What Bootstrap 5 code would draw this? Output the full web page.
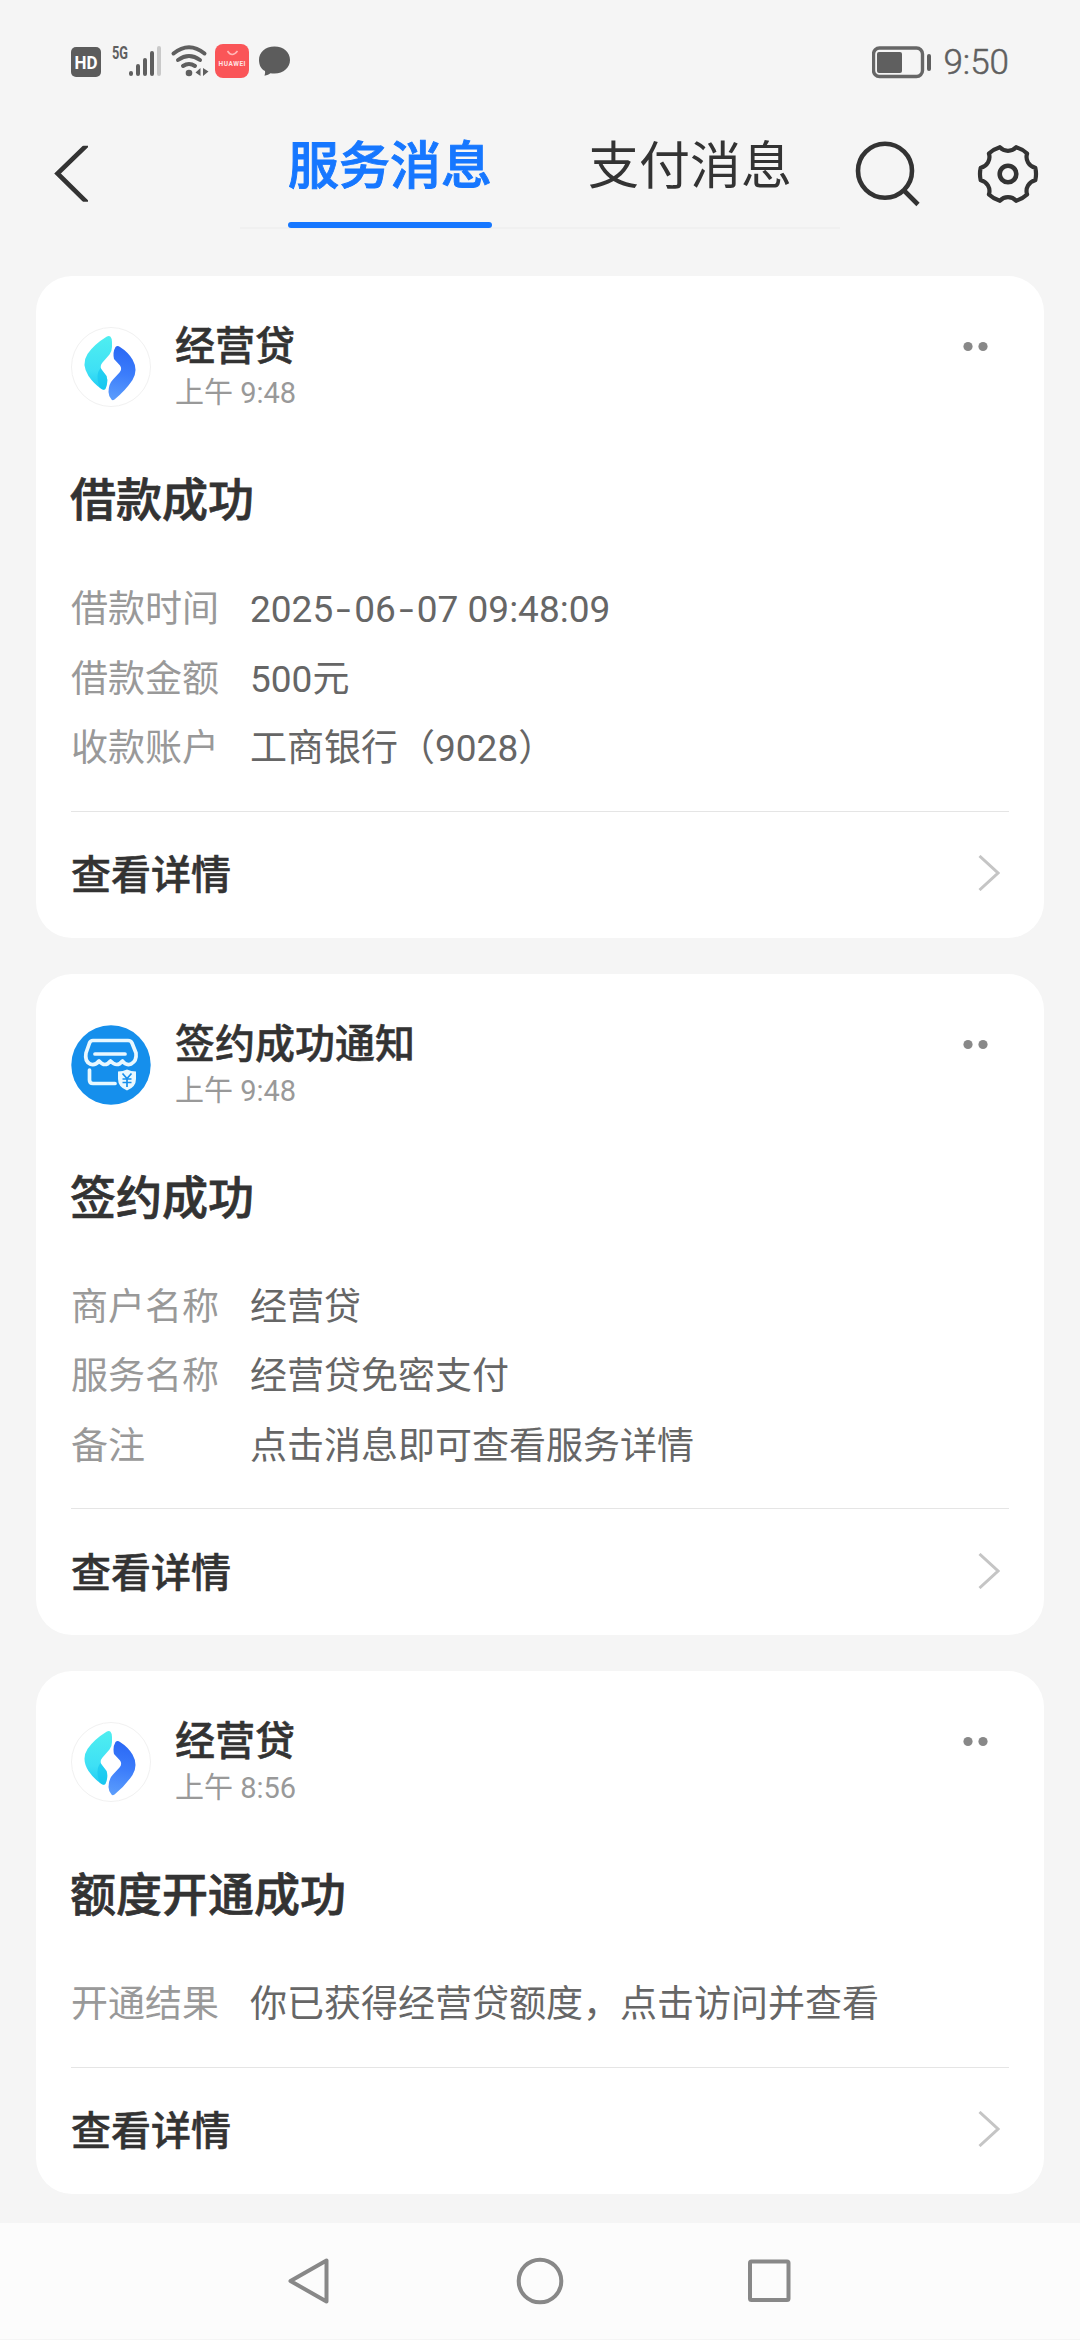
<!DOCTYPE html>
<html lang="zh-CN">
<head>
<meta charset="utf-8">
<meta name="viewport" content="width=device-width, initial-scale=1">
<title>服务消息</title>
<link href="https://cdn.jsdelivr.net/npm/bootstrap@5.3.0/dist/css/bootstrap.min.css" rel="stylesheet">
<style>
body{width:1080px;height:2340px;overflow:hidden;background:#f5f5f5;color:#333;font-family:Roboto,"Noto Sans CJK SC",sans-serif}
svg{display:block;flex:none}
.status-bar{height:124px;padding:0 71px 0 71px}
.status-left{height:124px}
.clock-text{font-size:35px;line-height:40px;color:#5f5f5f;font-weight:300;-webkit-text-stroke:.5px #5f5f5f;margin-left:11px;padding-top:2px}
.top-bar{height:105px;margin-bottom:47px}
.back-box{width:240px;padding:20px 0 0 54px}
.msg-tabs{width:600px;height:105px;border-bottom:2px solid #f0f0f0;--bs-nav-link-padding-x:0;--bs-nav-link-padding-y:0;flex:none;flex-wrap:nowrap}
.msg-tabs .nav-item{width:300px;display:flex;justify-content:center}
.msg-tabs .nav-link{width:204px;height:104px;padding:13px 0 0;font-size:51px;line-height:60px;color:#333;white-space:nowrap;border:0;position:relative}
.msg-tabs .nav-link.active{color:#1677ff;font-weight:500;-webkit-text-stroke:.9px #1677ff}
.msg-tabs .nav-link.active::after{content:"";position:absolute;left:0;right:0;bottom:0;height:6px;border-radius:3px;background:#1677ff}
.msg-list{padding:0 36px;gap:36px}
.msg-card{border:0;border-radius:36px;padding:0 35px;background:#fff;color:#333}
.msg-head{padding-top:51px;height:131px}
.sender{margin-left:24px}
.sender-name{font-size:40px;line-height:44px;font-weight:500;margin-top:-2px;-webkit-text-stroke:.5px #333}
.sender-time{font-size:29px;line-height:40px;color:#999;margin-top:4px}
.more-dots{margin:14px 20px 0 0}
.msg-title{font-size:46px;line-height:60px;font-weight:500;-webkit-text-stroke:.7px #333;margin:63px 0 45px -1px}
.msg-rows{padding-bottom:27px;margin:0}
.msg-rows>div{height:69.5px;font-size:37px;line-height:69.5px;white-space:nowrap}
.msg-rows dt{width:179px;color:#999;font-weight:400;flex:none}
.msg-rows dd{margin:0;color:#666}
.date-dash{display:inline-block;width:21px;text-align:center;transform:scaleX(1.4)}
.msg-foot{height:127px;border-top:1px solid #e5e5e5;font-size:40px;font-weight:500;-webkit-text-stroke:.5px #333;padding-right:9px}
.msg-foot span{padding-top:3px}
.msg-foot svg{margin-bottom:3px}
.sys-nav{height:116px;margin-top:29px;background:#fcfcfc;padding:0 286px}
</style>
<script src="https://cdn.jsdelivr.net/npm/bootstrap@5.3.0/dist/js/bootstrap.bundle.min.js"></script>
</head>
<body>
<svg width="0" height="0" class="position-absolute" aria-hidden="true">
<defs>
<linearGradient id="cy" x1="0" y1="0" x2="0" y2="1"><stop offset="0" stop-color="#4feef0"/><stop offset=".65" stop-color="#3ee0f5"/><stop offset="1" stop-color="#1ecbf3"/></linearGradient>
<linearGradient id="bl" x1=".4" y1="0" x2=".3" y2="1"><stop offset="0" stop-color="#2a68f5"/><stop offset=".5" stop-color="#3c7dfb"/><stop offset="1" stop-color="#5b9dfc"/></linearGradient>
<symbol id="loan" viewBox="0 0 80 80">
<circle cx="40" cy="40" r="39.5" fill="#fff" stroke="#f1f1f1"/>
<path d="M35.500 9.800Q38 8 39.500 9.800Q41 11.500 41 15V20Q41 24 38.500 27.500L31.500 35.500Q28.500 39 30.500 42.500L35.500 49Q36.700 52 36 57L35 60.500Q34 64 30.500 62Q23 57 17.500 49Q10 37 16.500 27Q23 17.500 35.500 9.800Z" fill="url(#cy)"/>
<path d="M29.500 41Q24 47.500 28.500 60.500L30.500 62Q34 64 35 60.500L36 57Q36.700 52 35.500 49Z" fill="#12c4ee" opacity=".6"/>
<path d="M44.500 20Q46.500 18 49 20Q57 25 61.500 32.500Q67.500 43 61.500 53Q54.500 63.500 43.500 72.500Q41.500 74 40.500 72.500Q37.500 69 37.500 65Q37.500 57 42 52.500L48.500 45.500Q51.500 42 49 38.500L43 32Q41.500 25 44.500 20Z" fill="url(#bl)"/>
</symbol>
<symbol id="shop" viewBox="0 0 80 80">
<circle cx="40" cy="40" r="39.700" fill="#158fec"/>
<g fill="none" stroke="#e8f8ff" stroke-width="3.700" stroke-linecap="round" stroke-linejoin="round">
<path d="M22 15.500H57Q60 15.500 61 18L65 28Q66 36 60 39Q55 41 51.500 36Q46 43 39.500 36Q34 43 28 36Q24 41 19 39Q13.500 36 15 28L18.500 18Q19.500 15.500 22 15.500Z"/>
<path d="M24 29H54"/><path d="M18.500 45V55Q18.500 58.500 22 58.500H44"/></g>
<path d="M47 46.500Q52 46.500 56 44.500Q60 46.500 65 46.500V54Q65 62 56 65.500Q47 62 47 54Z" fill="#e8f8ff"/>
<path d="M51.500 48.500L56 53.500L60.500 48.500M56 53.500V62M51.500 54H60.500M51.500 57.500H60.500" fill="none" stroke="#158fec" stroke-width="1.700"/>
</symbol>
<symbol id="dots" viewBox="0 0 26 12"><circle cx="5" cy="5.500" r="4.600" fill="#888"/><circle cx="20" cy="5.500" r="4.600" fill="#888"/></symbol>
<symbol id="next" viewBox="0 0 22 36"><path d="M1.500 1L20 18L1.500 35" fill="none" stroke="#c5c5c5" stroke-width="3"/></symbol>
</defs>
</svg>

<header class="status-bar d-flex align-items-center justify-content-between">
<svg class="status-left" width="224" height="124" viewBox="71 0 224 124">
<rect x="71" y="47" width="30" height="30" rx="5" fill="#5c5c5c"/>
<text x="86" y="69" text-anchor="middle" font-size="19" font-weight="700" fill="#fff" font-family="Roboto,sans-serif" textLength="23" lengthAdjust="spacingAndGlyphs">HD</text>
<text x="112" y="59" font-size="19" font-weight="700" fill="#5f5f5f" font-family="Roboto,sans-serif" textLength="16" lengthAdjust="spacingAndGlyphs">5G</text>
<g stroke="#5f5f5f" stroke-width="4" stroke-linecap="round"><path d="M131 73V74M138 66V74M145 60V74M152 53V74"/><path d="M159 48V74" stroke="#c9c9c9"/></g>
<g fill="none" stroke="#5f5f5f" stroke-width="4" stroke-linecap="round"><path d="M173.500 53.500Q189 41 204.500 53.500M178 60Q189 52 200 60M183 66Q189 62 195 66"/></g>
<circle cx="189" cy="73" r="3.300" fill="#5f5f5f"/>
<path d="M200.500 68V76L195.500 72.500ZM203 68V76L208.500 71.500Z" fill="#5f5f5f"/>
<rect x="215" y="44" width="34" height="34" rx="8" fill="#fa5558"/>
<path d="M227.500 51Q232 58 237.500 51" fill="none" stroke="#ffb8b8" stroke-width="1.500"/>
<text x="232" y="66" text-anchor="middle" font-size="6.500" font-weight="700" fill="#ffe3e3" font-family="Roboto,sans-serif" textLength="27">HUAWEI</text>
<path d="M274.500 46.500C284 46.500 290 52.500 290 60C290 67.500 283.500 73.500 274.500 73.500Q272 73.500 270.500 73.200Q268.500 75 264.500 75.700Q265.500 73.500 265 71C261 69 259 65 259 60C259 52.500 265 46.500 274.500 46.500Z" fill="#5c5c5c"/>
</svg>
<div class="d-flex align-items-center">
<svg width="60" height="34" viewBox="872 44 60 34"><rect x="873.500" y="47" width="49" height="28.500" rx="6" fill="none" stroke="#666" stroke-width="3.400"/><rect x="877" y="51" width="25" height="21" rx="2" fill="#5f5f5f"/><path d="M929 55V68" stroke="#5f5f5f" stroke-width="4" stroke-linecap="round"/></svg>
<span class="clock-text">9:50</span>
</div>
</header>

<div class="top-bar d-flex">
<div class="back-box"><svg width="36" height="60" viewBox="54 144 36 60"><clipPath id="bc"><path d="M50 145.700H88V201.700H50Z"/></clipPath><path d="M89.500 142.500L57.500 173.500L89.500 205" fill="none" stroke="#333" stroke-width="4.600" clip-path="url(#bc)"/></svg></div>
<ul class="nav msg-tabs">
<li class="nav-item"><a class="nav-link active">服务消息</a></li>
<li class="nav-item"><a class="nav-link">支付消息</a></li>
</ul>
<svg width="240" height="105" viewBox="840 124 240 105" fill="none" stroke="#333" stroke-width="4.600">
<circle cx="885" cy="170.700" r="27"/><path d="M904 190.500L918 204.500"/>
<g transform="translate(1008 174)"><circle r="8.300"/><path stroke-width="4.200" stroke-linejoin="round" d="M8.200 -26.800A28 28 0 0 1 19.100 -20.500A11 11 0 0 0 27.300 -6.300A28 28 0 0 1 27.300 6.300A11 11 0 0 0 19.100 20.500A28 28 0 0 1 8.200 26.800A11 11 0 0 0 -8.200 26.800A28 28 0 0 1 -19.100 20.500A11 11 0 0 0 -27.300 6.300A28 28 0 0 1 -27.300 -6.300A11 11 0 0 0 -19.100 -20.500A28 28 0 0 1 -8.200 -26.800A11 11 0 0 0 8.200 -26.800Z"/></g>
</svg>
</div>

<main class="msg-list d-flex flex-column">
<article class="card msg-card">
<div class="msg-head d-flex"><svg width="80" height="80"><use href="#loan"/></svg>
<div class="sender flex-grow-1"><div class="sender-name">经营贷</div><div class="sender-time">上午 9:48</div></div>
<svg class="more-dots" width="26" height="12"><use href="#dots"/></svg></div>
<h2 class="msg-title">借款成功</h2>
<dl class="msg-rows">
<div class="d-flex"><dt>借款时间</dt><dd>2025<span class="date-dash">-</span>06<span class="date-dash">-</span>07 09:48:09</dd></div>
<div class="d-flex"><dt>借款金额</dt><dd>500元</dd></div>
<div class="d-flex"><dt>收款账户</dt><dd>工商银行（9028）</dd></div>
</dl>
<div class="msg-foot d-flex align-items-center justify-content-between"><span>查看详情</span><svg width="22" height="36"><use href="#next"/></svg></div>
</article>

<article class="card msg-card">
<div class="msg-head d-flex"><svg width="80" height="80"><use href="#shop"/></svg>
<div class="sender flex-grow-1"><div class="sender-name">签约成功通知</div><div class="sender-time">上午 9:48</div></div>
<svg class="more-dots" width="26" height="12"><use href="#dots"/></svg></div>
<h2 class="msg-title">签约成功</h2>
<dl class="msg-rows">
<div class="d-flex"><dt>商户名称</dt><dd>经营贷</dd></div>
<div class="d-flex"><dt>服务名称</dt><dd>经营贷免密支付</dd></div>
<div class="d-flex"><dt>备注</dt><dd>点击消息即可查看服务详情</dd></div>
</dl>
<div class="msg-foot d-flex align-items-center justify-content-between"><span>查看详情</span><svg width="22" height="36"><use href="#next"/></svg></div>
</article>

<article class="card msg-card">
<div class="msg-head d-flex"><svg width="80" height="80"><use href="#loan"/></svg>
<div class="sender flex-grow-1"><div class="sender-name">经营贷</div><div class="sender-time">上午 8:56</div></div>
<svg class="more-dots" width="26" height="12"><use href="#dots"/></svg></div>
<h2 class="msg-title">额度开通成功</h2>
<dl class="msg-rows">
<div class="d-flex"><dt>开通结果</dt><dd>你已获得经营贷额度，点击访问并查看</dd></div>
</dl>
<div class="msg-foot d-flex align-items-center justify-content-between"><span>查看详情</span><svg width="22" height="36"><use href="#next"/></svg></div>
</article>
</main>

<nav class="sys-nav d-flex align-items-center justify-content-between">
<svg width="46" height="48" viewBox="0 0 46 48" fill="none" stroke="#888" stroke-width="4" stroke-linejoin="round"><path d="M40.500 3.500V44.500L4.500 24Z"/></svg>
<svg width="48" height="48" viewBox="0 0 48 48" fill="none" stroke="#888" stroke-width="4"><circle cx="24" cy="24" r="21.300"/></svg>
<svg width="46" height="48" viewBox="0 0 46 48" fill="none" stroke="#888" stroke-width="4"><rect x="2" y="4.500" width="38.500" height="38.500" rx="1.500"/></svg>
</nav>
</body>
</html>
